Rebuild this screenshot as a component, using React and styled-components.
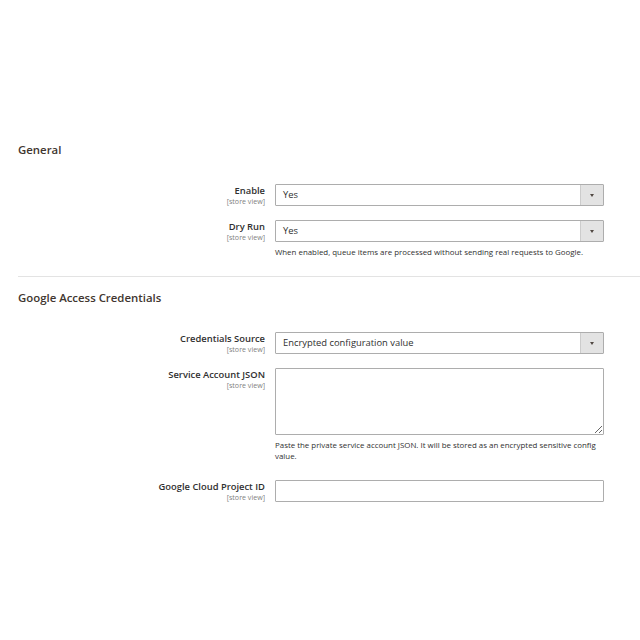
import styled, { createGlobalStyle } from "styled-components";

const GlobalStyle = createGlobalStyle`
  html, body {
    margin: 0;
    padding: 0;
    background: #ffffff;
  }
  body {
    font-family: "Open Sans", "Noto Sans", Arial, sans-serif;
    color: #303030;
  }
`;

const sections = [
  {
    title: "General",
    fields: [
      { label: "Enable", type: "select", value: "Yes" },
      {
        label: "Dry Run",
        type: "select",
        value: "Yes",
        note: "When enabled, queue items are processed without sending real requests to Google.",
      },
    ],
  },
  {
    title: "Google Access Credentials",
    fields: [
      {
        label: "Credentials Source",
        type: "select",
        value: "Encrypted configuration value",
      },
      {
        label: "Service Account JSON",
        type: "textarea",
        note: "Paste the private service account JSON. It will be stored as an encrypted sensitive config value.",
      },
      { label: "Google Cloud Project ID", type: "input" },
    ],
  },
];

const Field = ({ field }) => (
  <Row>
    <LabelCol>
      <Label>{field.label}</Label>
      <Scope>[store view]</Scope>
    </LabelCol>
    <Control>
      {field.type === "select" && (
        <Select>
          <SelectValue>{field.value}</SelectValue>
          <SelectButton>
            <Arrow />
          </SelectButton>
        </Select>
      )}
      {field.type === "textarea" && <TextArea />}
      {field.type === "input" && <Input />}
      {field.note && <Note>{field.note}</Note>}
    </Control>
  </Row>
);

export default function App() {
  return (
    <>
      <GlobalStyle />
      <Page>
        {sections.map((section, i) => (
          <Section key={section.title} $first={i === 0}>
            <Title>{section.title}</Title>
            <Fields>
              {section.fields.map((f) => (
                <Field key={f.label} field={f} />
              ))}
            </Fields>
          </Section>
        ))}
      </Page>
    </>
  );
}

const Page = styled.div`
  padding: 140px 0 100px 18px;
  width: 640px;
  box-sizing: border-box;
`;

const Section = styled.section`
  border-top: ${({ $first }) => ($first ? "none" : "1px solid #e3e3e3")};
  padding-top: ${({ $first }) => ($first ? "0" : "11px")};
  margin-top: ${({ $first }) => ($first ? "0" : "14px")};
`;

const Title = styled.h2`
  margin: 0;
  font-size: 11.4px;
  line-height: 20px;
  font-weight: 600;
  color: #41362f;
`;

const Fields = styled.div`
  display: flex;
  flex-direction: column;
  gap: 14px;
  margin-top: 24px;
`;

const Row = styled.div`
  display: grid;
  grid-template-columns: 247px 329px;
  column-gap: 10px;
`;

const LabelCol = styled.div`
  display: flex;
  flex-direction: column;
  align-items: flex-end;
  padding-top: 1px;
`;

const Label = styled.span`
  font-size: 9.4px;
  line-height: 11px;
  font-weight: 600;
  color: #303030;
`;

const Scope = styled.span`
  font-size: 7.1px;
  line-height: 10px;
  color: #808080;
`;

const Control = styled.div`
  display: flex;
  flex-direction: column;
`;

const Select = styled.div`
  display: flex;
  height: 22px;
  box-sizing: border-box;
  border: 1px solid #adadad;
  border-radius: 1px;
  background: #ffffff;
`;

const SelectValue = styled.span`
  flex: 1;
  padding-left: 7px;
  font-size: 9.4px;
  line-height: 20px;
  color: #303030;
`;

const SelectButton = styled.span`
  width: 22px;
  display: flex;
  align-items: center;
  justify-content: center;
  background: #e3e3e3;
  border-left: 1px solid #cccccc;
`;

const Arrow = styled.span`
  width: 0;
  height: 0;
  border-left: 2.5px solid transparent;
  border-right: 2.5px solid transparent;
  border-top: 3.5px solid #514943;
`;

const TextArea = styled.textarea`
  height: 67px;
  box-sizing: border-box;
  border: 1px solid #adadad;
  border-radius: 1px;
  font-family: inherit;
  font-size: 9.4px;
  outline: none;
`;

const Input = styled.input`
  height: 22px;
  box-sizing: border-box;
  border: 1px solid #adadad;
  border-radius: 1px;
  font-family: inherit;
  font-size: 9.4px;
  outline: none;
`;

const Note = styled.p`
  margin: 5px 0 4px;
  font-size: 7.9px;
  line-height: 11px;
  color: #303030;
`;
